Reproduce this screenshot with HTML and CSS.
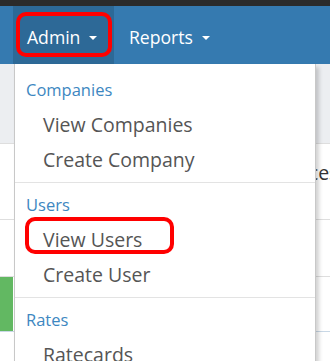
FILE: index.html
```html
<!DOCTYPE html>
<html lang="en">
<head>
  <meta charset="UTF-8">
  <title>Admin menu</title>
  <link rel="stylesheet" href="styles.css">
</head>
<body>
  <div class="topbar"></div>
  <nav class="navbar">
    <div class="nav-item active marked">
      Admin <span class="caret"></span>
      <div class="dropdown">
        <div class="header">Companies</div>
        <div class="link">View Companies</div>
        <div class="link">Create Company</div>
        <div class="divider"></div>
        <div class="header">Users</div>
        <div class="link marked">View Users</div>
        <div class="link">Create User</div>
        <div class="divider"></div>
        <div class="header">Rates</div>
        <div class="link">Ratecards</div>
      </div>
    </div>
    <div class="nav-item">
      Reports <span class="caret"></span>
    </div>
  </nav>

  <div class="page">
    <div class="row head"></div>
    <div class="row tall"><span class="cell-text">Invoices</span></div>
    <div class="row"></div>
    <div class="row green-row"><span class="tag"></span></div>
    <div class="row"></div>
  </div>
</body>
</html>
```

FILE: styles.css
```css
body {
  margin: 0;
  background: #fff;
  font-family: "Open Sans", "Liberation Sans", sans-serif;
  overflow: hidden;
}
.topbar {
  height: 6px;
  background: #2b2b2b;
}
.navbar {
  height: 58px;
  background: #357ab0;
  display: flex;
  padding-left: 13px;
  position: relative;
  z-index: 2;
}
.nav-item {
  position: relative;
  display: flex;
  align-items: center;
  gap: 9px;
  padding: 3px 16px 0 14px;
  color: #fff;
  font-size: 17.6px;
}
.nav-item + .nav-item {
  padding-left: 15px;
}
.nav-item.active {
  background: #2d6997;
  width: 71px;
}
.caret {
  width: 0;
  height: 0;
  border-left: 4.5px solid transparent;
  border-right: 4.5px solid transparent;
  border-top: 4.5px solid #fff;
  margin-top: 2px;
}
.nav-item.marked::after {
  content: "";
  position: absolute;
  left: 3px;
  top: 6px;
  width: 88px;
  height: 37px;
  border: 4px solid #f00;
  border-radius: 10px;
}

/* dropdown */
.dropdown {
  position: absolute;
  top: 58px;
  left: 1px;
  width: 300px;
  background: #fff;
  border: 1px solid #c8c8c8;
  border-top: none;
  box-shadow: 3px 3px 4px rgba(0, 0, 0, .18);
  padding-top: 8px;
  padding-bottom: 10px;
}
.header {
  height: 35px;
  line-height: 35px;
  padding-left: 11px;
  font-size: 16.5px;
  color: #3d87c1;
}
.link {
  position: relative;
  height: 35px;
  line-height: 35px;
  padding-left: 28px;
  font-size: 19.5px;
  color: #555;
}
.link.marked::after {
  content: "";
  position: absolute;
  left: 10px;
  top: -5px;
  width: 141px;
  height: 29px;
  border: 4px solid #f00;
  border-radius: 10px;
}
.divider {
  height: 1px;
  margin: 5px 0 4px;
  background: #e3e3e3;
}

/* page behind */
.row {
  border-bottom: 1px solid #dedede;
  height: 56px;
}
.row.head {
  height: 79px;
  background: #eceef1;
}
.row.tall {
  height: 75px;
  overflow: hidden;
}
.cell-text {
  display: block;
  margin: 15px 0 0 265px;
  line-height: 27px;
  font-size: 19.5px;
  color: #333;
  white-space: nowrap;
}
.green-row {
  height: 54px;
  border-bottom-color: #c9d8e6;
}
.tag {
  display: block;
  width: 13px;
  height: 54px;
  background: #62b862;
}
```
